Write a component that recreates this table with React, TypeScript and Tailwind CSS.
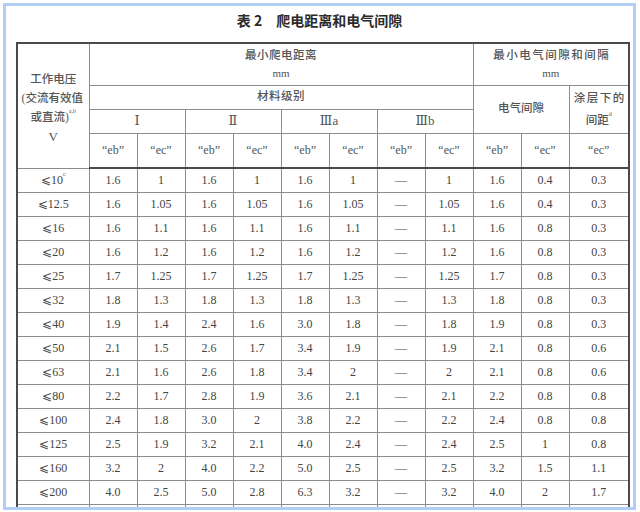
import React from 'react';

const serif = "font-['Liberation_Serif','DejaVu_Serif','Noto_Sans_CJK_SC',serif]";
const cjk = "font-['Liberation_Serif','Noto_Sans_CJK_SC',sans-serif]";

type Row = { v: string; sup?: string; cells: string[] };

const rows: Row[] = [
  { v: '10', sup: 'c', cells: ['1.6', '1', '1.6', '1', '1.6', '1', '—', '1', '1.6', '0.4', '0.3'] },
  { v: '12.5', cells: ['1.6', '1.05', '1.6', '1.05', '1.6', '1.05', '—', '1.05', '1.6', '0.4', '0.3'] },
  { v: '16', cells: ['1.6', '1.1', '1.6', '1.1', '1.6', '1.1', '—', '1.1', '1.6', '0.8', '0.3'] },
  { v: '20', cells: ['1.6', '1.2', '1.6', '1.2', '1.6', '1.2', '—', '1.2', '1.6', '0.8', '0.3'] },
  { v: '25', cells: ['1.7', '1.25', '1.7', '1.25', '1.7', '1.25', '—', '1.25', '1.7', '0.8', '0.3'] },
  { v: '32', cells: ['1.8', '1.3', '1.8', '1.3', '1.8', '1.3', '—', '1.3', '1.8', '0.8', '0.3'] },
  { v: '40', cells: ['1.9', '1.4', '2.4', '1.6', '3.0', '1.8', '—', '1.8', '1.9', '0.8', '0.3'] },
  { v: '50', cells: ['2.1', '1.5', '2.6', '1.7', '3.4', '1.9', '—', '1.9', '2.1', '0.8', '0.6'] },
  { v: '63', cells: ['2.1', '1.6', '2.6', '1.8', '3.4', '2', '—', '2', '2.1', '0.8', '0.6'] },
  { v: '80', cells: ['2.2', '1.7', '2.8', '1.9', '3.6', '2.1', '—', '2.1', '2.2', '0.8', '0.8'] },
  { v: '100', cells: ['2.4', '1.8', '3.0', '2', '3.8', '2.2', '—', '2.2', '2.4', '0.8', '0.8'] },
  { v: '125', cells: ['2.5', '1.9', '3.2', '2.1', '4.0', '2.4', '—', '2.4', '2.5', '1', '0.8'] },
  { v: '160', cells: ['3.2', '2', '4.0', '2.2', '5.0', '2.5', '—', '2.5', '3.2', '1.5', '1.1'] },
  { v: '200', cells: ['4.0', '2.5', '5.0', '2.8', '6.3', '3.2', '—', '3.2', '4.0', '2', '1.7'] },
];

const cell = 'border border-[#8c8c8c] text-center align-middle p-0 whitespace-nowrap';

export default function App() {
  const quotes = ['“eb”', '“ec”', '“eb”', '“ec”', '“eb”', '“ec”', '“eb”', '“ec”', '“eb”', '“ec”', '“ec”'];

  return (
    <div className="w-[640px] h-[512px] bg-white pl-[3px] pt-[3px] pr-[4px] pb-[2px]">
      <div className="h-full border-[3px] border-[#b2cdf6] overflow-hidden">
        <div className="h-[29px] leading-[29px] text-center text-[14px] font-bold text-[#2b2b2b] font-['Noto_Sans_CJK_SC',sans-serif]">
          表 2　爬电距离和电气间隙
        </div>
        <table className={`ml-[10px] mt-[7px] w-[613px] table-fixed border-collapse border-2 border-[#4a4a4a] text-[#444] ${serif}`}>
          <colgroup>
            <col className="w-[72px]" />
            {Array.from({ length: 10 }).map((_, i) => (
              <col key={i} className="w-[48px]" />
            ))}
            <col className="w-[60px]" />
          </colgroup>
          <thead className={`${cjk} text-[11.5px] font-medium text-[#555]`}>
            <tr className="h-[42px]">
              <td rowSpan={4} className={`${cell} leading-[19px] pt-[4px]`}>
                <div>工作电压</div>
                <div className="-ml-[2px]">(交流有效值</div>
                <div>
                  或直流)<sup className="text-[6px] align-[5px]">a,b</sup>
                </div>
                <div className={`${serif} text-[13px] font-normal`}>V</div>
              </td>
              <td colSpan={8} className={`${cell} leading-[18px]`}>
                <div className="tracking-[0.5px]">最小爬电距离</div>
                <div className={`${serif} text-[11px] font-normal`}>mm</div>
              </td>
              <td colSpan={3} className={`${cell} leading-[18px]`}>
                <div className="tracking-[1.5px] pl-[2px]">最小电气间隙和间隔</div>
                <div className={`${serif} text-[11px] font-normal`}>mm</div>
              </td>
            </tr>
            <tr className="h-[24px]">
              <td colSpan={8} className={cell}>
                <span className="tracking-[0.5px]">材料级别</span>
              </td>
              <td colSpan={2} rowSpan={2} className={cell}>
                电气间隙
              </td>
              <td rowSpan={2} className={`${cell} leading-[22px]`}>
                <div className="tracking-[1.5px] pl-[2px]">涂层下的</div>
                <div>
                  间距<sup className="text-[6px] align-[5px]">d</sup>
                </div>
              </td>
            </tr>
            <tr className={`h-[24px] ${serif} text-[13px] font-normal`}>
              <td colSpan={2} className={cell}>Ⅰ</td>
              <td colSpan={2} className={cell}>Ⅱ</td>
              <td colSpan={2} className={cell}>Ⅲa</td>
              <td colSpan={2} className={cell}>Ⅲb</td>
            </tr>
            <tr className={`h-[35px] ${serif} text-[12px] font-normal`}>
              {quotes.map((q, i) => (
                <td key={i} className={`${cell} border-b-2 border-b-[#4a4a4a]`}>
                  {q}
                </td>
              ))}
            </tr>
          </thead>
          <tbody className="text-[12px]">
            {rows.map((r) => (
              <tr key={r.v} className="h-[24px]">
                <td className={cell}>
                  ⩽{r.v}
                  {r.sup && <sup className="text-[6px] align-[5px]">{r.sup}</sup>}
                </td>
                {r.cells.map((c, i) => (
                  <td key={i} className={cell}>
                    {c}
                  </td>
                ))}
              </tr>
            ))}
            {/* next row is cut off by the frame, only its grid lines show */}
            <tr className="h-[24px]">
              {Array.from({ length: 12 }).map((_, i) => (
                <td key={i} className={cell} />
              ))}
            </tr>
          </tbody>
        </table>
      </div>
    </div>
  );
}
